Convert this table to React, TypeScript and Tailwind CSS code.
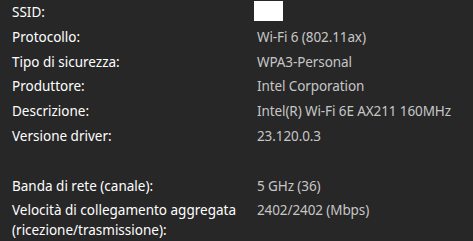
import React from 'react';

type Row = { label: string; value?: string; redacted?: boolean; spaceBefore?: boolean };

const ROWS: Row[] = [
  { label: 'SSID:', redacted: true },
  { label: 'Protocollo:', value: 'Wi-Fi 6 (802.11ax)' },
  { label: 'Tipo di sicurezza:', value: 'WPA3-Personal' },
  { label: 'Produttore:', value: 'Intel Corporation' },
  { label: 'Descrizione:', value: 'Intel(R) Wi-Fi 6E AX211 160MHz' },
  { label: 'Versione driver:', value: '23.120.0.3' },
  { label: 'Banda di rete (canale):', value: '5 GHz (36)', spaceBefore: true },
  { label: 'Velocità di collegamento aggregata (ricezione/trasmissione):', value: '2402/2402 (Mbps)' },
];

const App: React.FC = () => {
  return (
    <div
      className="w-[473px] h-[241px] overflow-hidden bg-[#272727] text-[13.5px] leading-[20px] pl-3 pt-[2px]"
      style={{ fontFamily: '"Noto Sans", "Open Sans", sans-serif' }}
    >
      <div className="flex flex-col gap-y-[4.8px]">
        {ROWS.map(row => (
          <div key={row.label} className={`flex ${row.spaceBefore ? 'mt-[24.8px]' : ''}`}>
            <div className="w-[245px] shrink-0 pr-2 text-white">{row.label}</div>
            <div className="text-[#c6c6c6] tracking-[-0.1px]">
              {row.redacted ? <div className="-ml-[3px] -mt-[1px] w-[29px] h-[20px] bg-white" /> : row.value}
            </div>
          </div>
        ))}
      </div>
    </div>
  );
};

export default App;
